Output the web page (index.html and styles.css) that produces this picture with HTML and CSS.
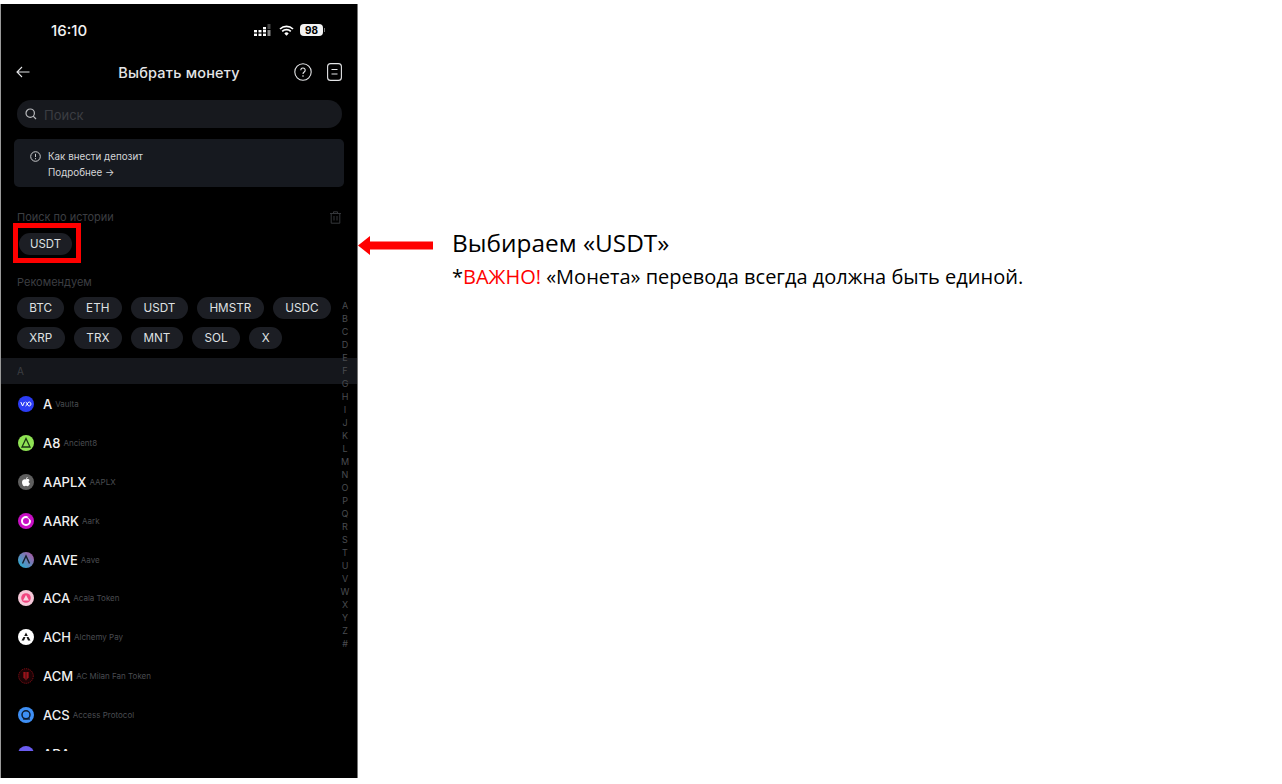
FILE: index.html
```html
<!DOCTYPE html>
<html lang="ru">
<head>
    <meta charset="UTF-8">
    <title>Выбрать монету</title>
    <link rel="stylesheet" href="styles.css">
</head>
<body>
    <div class="phone">
        <div class="status-bar">
            <span class="time">16:10</span>
            <div class="status-icons">
                <svg width="18" height="12" viewBox="0 0 18 12">
                    <g fill="#fff">
                        <rect x="0" y="6" width="3" height="2.4"/><rect x="0" y="9.6" width="3" height="2.4"/>
                        <rect x="4.5" y="6" width="3" height="2.4"/><rect x="4.5" y="9.6" width="3" height="2.4"/>
                        <rect x="9" y="3" width="3" height="2.4"/><rect x="9" y="6" width="3" height="2.4"/><rect x="9" y="9.6" width="3" height="2.4"/>
                    </g>
                    <g fill="#444"><rect x="13.5" y="0" width="3" height="5"/></g>
                    <rect x="13.5" y="6" width="3" height="6" fill="#888"/>
                </svg>
                <svg class="wifi" width="15" height="11" viewBox="0 0 15 11">
                    <path d="M1 4a9.5 9.5 0 0 1 13 0M3.2 6.4a6.3 6.3 0 0 1 8.6 0" fill="none" stroke="#fff" stroke-width="1.7"/>
                    <path d="M5.3 8.4a3.2 3.2 0 0 1 4.4 0L7.5 10.8z" fill="#fff"/>
                </svg>
                <span class="battery">98</span>
                <span class="battery-tip"></span>
            </div>
        </div>

        <div class="nav">
            <svg class="back" width="14" height="12" viewBox="0 0 14 12">
                <path d="M13.5 6H1M6 1 1 6l5 5" fill="none" stroke="#e4e5e7" stroke-width="1.1"/>
            </svg>
            <h1>Выбрать монету</h1>
            <div class="nav-icons">
                <svg width="18" height="18" viewBox="0 0 18 18">
                    <circle cx="9" cy="9" r="8.2" fill="none" stroke="#e4e5e7" stroke-width="1.1"/>
                    <path d="M6.8 7.2a2.2 2.2 0 1 1 3.4 1.8c-.8.5-1.2 1-1.2 1.9" fill="none" stroke="#e4e5e7" stroke-width="1.1"/>
                    <circle cx="9" cy="13" r=".8" fill="#e4e5e7"/>
                </svg>
                <svg width="15" height="18" viewBox="0 0 15 18">
                    <rect x=".6" y=".6" width="13.8" height="16.8" rx="3" fill="none" stroke="#e4e5e7" stroke-width="1.1"/>
                    <path d="M4.5 6.5h6M4.5 11h6" stroke="#e4e5e7" stroke-width="1.1"/>
                </svg>
            </div>
        </div>

        <div class="search">
            <svg width="12" height="12" viewBox="0 0 12 12">
                <circle cx="5.2" cy="5.2" r="4.2" fill="none" stroke="#b9babd" stroke-width="1.2"/>
                <path d="M8.2 8.2 11 11" stroke="#b9babd" stroke-width="1.2"/>
            </svg>
            <span>Поиск</span>
        </div>

        <div class="tip">
            <div class="tip-line">
                <svg width="11" height="11" viewBox="0 0 11 11">
                    <circle cx="5.5" cy="5.5" r="4.8" fill="none" stroke="#c9cacc"/>
                    <path d="M5.5 2.8v3.2" stroke="#c9cacc"/>
                    <circle cx="5.5" cy="7.7" r=".6" fill="#c9cacc"/>
                </svg>
                <span>Как внести депозит</span>
            </div>
            <div class="tip-more">Подробнее →</div>
        </div>

        <div class="section-head">
            <span>Поиск по истории</span>
            <svg width="11" height="13" viewBox="0 0 11 13">
                <path d="M0 2.5h11M3.5 2.5V.8h4v1.7M1.2 2.5V12.2h8.6V2.5M4 5v4.5M7 5v4.5" fill="none" stroke="#35373b"/>
            </svg>
        </div>
        <div class="history">
            <span class="chip">USDT</span>
            <div class="highlight"></div>
        </div>

        <div class="section-head recommend"><span>Рекомендуем</span></div>
        <div class="chips">
            <span class="chip">BTC</span>
            <span class="chip">ETH</span>
            <span class="chip">USDT</span>
            <span class="chip">HMSTR</span>
            <span class="chip">USDC</span>
        </div>
        <div class="chips">
            <span class="chip">XRP</span>
            <span class="chip">TRX</span>
            <span class="chip">MNT</span>
            <span class="chip">SOL</span>
            <span class="chip">X</span>
        </div>

        <div class="band">A</div>

        <div class="coins">
            <div class="coin">
                <svg class="coin-icon" viewBox="0 0 16 16"><circle cx="8" cy="8" r="8" fill="#2b3cf5"/><path d="M2.800 6 4.600 10 6.400 6M7.500 10c1.500 0 1.800-4 3.600-4 2.400 0 2.400 4 0 4-1.800 0-2-4-3.400-4" fill="none" stroke="#fff" stroke-width="1"/></svg>
                <b>A</b><small>Vaulta</small>
            </div>
            <div class="coin">
                <svg class="coin-icon" viewBox="0 0 16 16"><circle cx="8" cy="8" r="8" fill="#8fe354"/><path d="M8 3.500 12 12H4z" fill="none" stroke="#1b3314" stroke-width="1.300"/></svg>
                <b>A8</b><small>Ancient8</small>
            </div>
            <div class="coin">
                <svg class="coin-icon" viewBox="0 0 16 16"><circle cx="8" cy="8" r="8" fill="#5f5f5f"/><path d="M8 5.500c1-.7 3-.7 3.600.8-1.400.8-1.200 2.800.4 3.300-.6 1.500-1.500 2.600-2.400 2.600-.7 0-1-.4-1.600-.4s-1 .4-1.600.4C5.200 12.200 4 10 4 8.200c0-2.600 2.500-3.400 4-2.700zM8 5c0-1 .7-1.800 1.700-2 0 1-.7 1.900-1.700 2z" fill="#fff"/></svg>
                <b>AAPLX</b><small>AAPLX</small>
            </div>
            <div class="coin">
                <svg class="coin-icon" viewBox="0 0 16 16"><circle cx="8" cy="8" r="8" fill="#c80fc4"/><circle cx="8" cy="8" r="4" fill="none" stroke="#fff" stroke-width="2"/><path d="M9 3.500h4v4z" fill="#c80fc4"/></svg>
                <b>AARK</b><small>Aark</small>
            </div>
            <div class="coin">
                <svg class="coin-icon" viewBox="0 0 16 16"><defs><linearGradient id="aave" x1="0" y1="1" x2="1" y2="0"><stop offset="0" stop-color="#1cb8d6"/><stop offset="1" stop-color="#b6509e"/></linearGradient></defs><circle cx="8" cy="8" r="8" fill="url(#aave)"/><path d="M4.500 11.500 8 4l3.500 7.500" fill="none" stroke="#14202b" stroke-width="1.400"/></svg>
                <b>AAVE</b><small>Aave</small>
            </div>
            <div class="coin">
                <svg class="coin-icon" viewBox="0 0 16 16"><circle cx="8" cy="8" r="8" fill="#f5c8d8"/><circle cx="8" cy="8" r="4.800" fill="#f0457f"/><path d="M8 5 11 10.500H5z" fill="#f9d5e2"/></svg>
                <b>ACA</b><small>Acala Token</small>
            </div>
            <div class="coin">
                <svg class="coin-icon" viewBox="0 0 16 16"><circle cx="8" cy="8" r="8" fill="#fff"/><path d="M8 3.500 9.800 7H6.200zM5.500 8h2L6 11.500H3.500zM8.500 8h2l2 3.500H10z" fill="#111"/></svg>
                <b>ACH</b><small>Alchemy Pay</small>
            </div>
            <div class="coin">
                <svg class="coin-icon" viewBox="0 0 16 16"><circle cx="8" cy="8" r="7.300" fill="#1a0305" stroke="#8a1018" stroke-dasharray="1.200 .8"/><path d="M5.500 4h5v5.500L8 12.500l-2.500-3z" fill="#c4141e"/><path d="M7.200 4v8M8.800 4v8" stroke="#111" stroke-width=".7"/></svg>
                <b>ACM</b><small>AC Milan Fan Token</small>
            </div>
            <div class="coin">
                <svg class="coin-icon" viewBox="0 0 16 16"><circle cx="8" cy="8" r="8" fill="#3e8ff5"/><circle cx="8" cy="7.800" r="4" fill="none" stroke="#0d1a2e" stroke-width="1.500"/><path d="M5 12h7" stroke="#0d1a2e" stroke-width="1.300"/></svg>
                <b>ACS</b><small>Access Protocol</small>
            </div>
            <div class="coin">
                <svg class="coin-icon" viewBox="0 0 16 16"><circle cx="8" cy="8" r="8" fill="#6a5cf0"/></svg>
                <b>ADA</b><small>Cardano</small>
            </div>
        </div>

        <div class="letters">
            <span>A</span><span>B</span><span>C</span><span>D</span><span>E</span><span>F</span><span>G</span><span>H</span><span>I</span><span>J</span><span>K</span><span>L</span><span>M</span><span>N</span><span>O</span><span>P</span><span>Q</span><span>R</span><span>S</span><span>T</span><span>U</span><span>V</span><span>W</span><span>X</span><span>Y</span><span>Z</span><span>#</span>
        </div>
    </div>

    <div class="note">
        <svg class="arrow" width="75" height="19" viewBox="0 0 75 19">
            <path d="M0 9.500 12 0V5.500H75V13.500H12V19z" fill="#f00"/>
        </svg>
        <div class="note-text">
            <div class="note-title">Выбираем «USDT»</div>
            <div class="note-sub">*<span class="red">ВАЖНО!</span> «Монета» перевода всегда должна быть единой.</div>
        </div>
    </div>
</body>
</html>
```

FILE: styles.css
```css
html, body {
    height: 100%;
    margin: 0;
}

body {
    background: #fff;
    display: flex;
    align-items: flex-start;
    font-family: 'Inter', sans-serif;
    overflow: hidden;
}

.phone {
    position: relative;
    box-sizing: border-box;
    width: 358px;
    height: 774px;
    margin-top: 4px;
    background: #000;
    border-left: 1px solid #9a9a9a;
    border-right: 1px solid #777;
    color: #e4e5e7;
    flex-shrink: 0;
}

/* status bar */
.status-bar {
    display: flex;
    justify-content: space-between;
    align-items: center;
    height: 16px;
    padding: 18px 32px 0 50px;
}

.time {
    font-size: 15px;
    font-weight: 500;
    color: #f2f2f2;
}

.status-icons {
    display: flex;
    align-items: center;
}

.wifi {
    margin-left: 7px;
}

.battery {
    margin-left: 6px;
    width: 23px;
    height: 12px;
    line-height: 12px;
    border-radius: 4px;
    background: #f2f2f2;
    color: #000;
    font-size: 10px;
    font-weight: 700;
    text-align: center;
}

.battery-tip {
    width: 1px;
    height: 4px;
    margin-left: 1px;
    background: #777;
}

/* header */
.nav {
    position: relative;
    display: flex;
    justify-content: space-between;
    align-items: center;
    height: 20px;
    margin-top: 24px;
    padding: 0 15px 0 15px;
}

.nav h1 {
    position: absolute;
    left: 0;
    right: 0;
    margin: 0;
    text-align: center;
    font-size: 14.5px;
    font-weight: 500;
    letter-spacing: .2px;
}

.nav-icons {
    display: flex;
    align-items: center;
    gap: 15px;
}

/* search */
.search {
    display: flex;
    align-items: center;
    gap: 7px;
    height: 28px;
    margin: 18px 15px 0 16px;
    padding-left: 8px;
    border-radius: 14px;
    background: #17191e;
    font-size: 13px;
    color: #3b3d42;
}

.search span {
    padding-top: 2px;
}

.tip {
    height: 48px;
    box-sizing: border-box;
    margin: 11px 13px 0;
    padding: 11px 16px;
    border-radius: 5px;
    background: #16191f;
    font-size: 9.8px;
    color: #d4d5d7;
}

.tip-line {
    display: flex;
    align-items: center;
    gap: 7px;
    height: 12px;
}

.tip-more {
    margin: 5px 0 0 18px;
    height: 12px;
    line-height: 12px;
}

/* sections */
.section-head {
    display: flex;
    justify-content: space-between;
    align-items: center;
    height: 14px;
    margin-top: 23px;
    padding: 0 16px;
    font-size: 11px;
    color: #3c3e42;
}

.recommend {
    margin-top: 20px;
}

.history {
    position: relative;
    padding: 9px 0 0 18px;
    display: flex;
}

.history .chip {
    padding: 0 11px;
    font-size: 11.4px;
}

.highlight {
    position: absolute;
    top: -1px;
    left: 12px;
    width: 68px;
    height: 40px;
    box-sizing: border-box;
    border: 5px solid #f00;
}

.chip {
    display: block;
    height: 22px;
    line-height: 22px;
    padding: 0 12.3px;
    border-radius: 11px;
    background: #1c1e24;
    font-size: 11.7px;
    color: #dfe0e2;
}

.chips {
    display: flex;
    gap: 9.5px;
    margin-top: 8px;
    padding-left: 16px;
}

.band {
    height: 26px;
    line-height: 26px;
    margin-top: 9px;
    padding-left: 16px;
    background: #15171c;
    font-size: 10px;
    color: #3c3e42;
}

/* coin list */
.coins {
    height: 366.4px;
    padding-top: .6px;
    overflow: hidden;
}

.coin {
    display: flex;
    align-items: center;
    height: 38.9px;
    padding-left: 17px;
}

.coin-icon {
    width: 16px;
    height: 16px;
    margin-right: 9px;
}

.coin b {
    font-size: 13px;
    font-weight: 500;
    color: #f0f0f1;
}

.coin small {
    margin-left: 3px;
    font-size: 8px;
    color: #4a4c50;
}

/* alphabet index sits on top of the list */
.letters {
    position: absolute;
    top: 295px;
    right: 5px;
    width: 14px;
    display: flex;
    flex-direction: column;
    align-items: center;
    font-size: 9px;
    line-height: 13px;
    color: #4a4c50;
}

/* annotation */
.note {
    display: flex;
    align-items: flex-start;
    padding-top: 228px;
    flex: 1;
}

.arrow {
    margin-top: 8px;
}

.note-text {
    margin-left: 19px;
    color: #000;
    font-family: 'Open Sans', sans-serif;
}

.note-title {
    font-size: 24.4px;
    line-height: 30px;
}

.note-sub {
    margin-top: 5px;
    font-size: 20px;
    line-height: 28px;
}

.red {
    color: #f00;
}
```
